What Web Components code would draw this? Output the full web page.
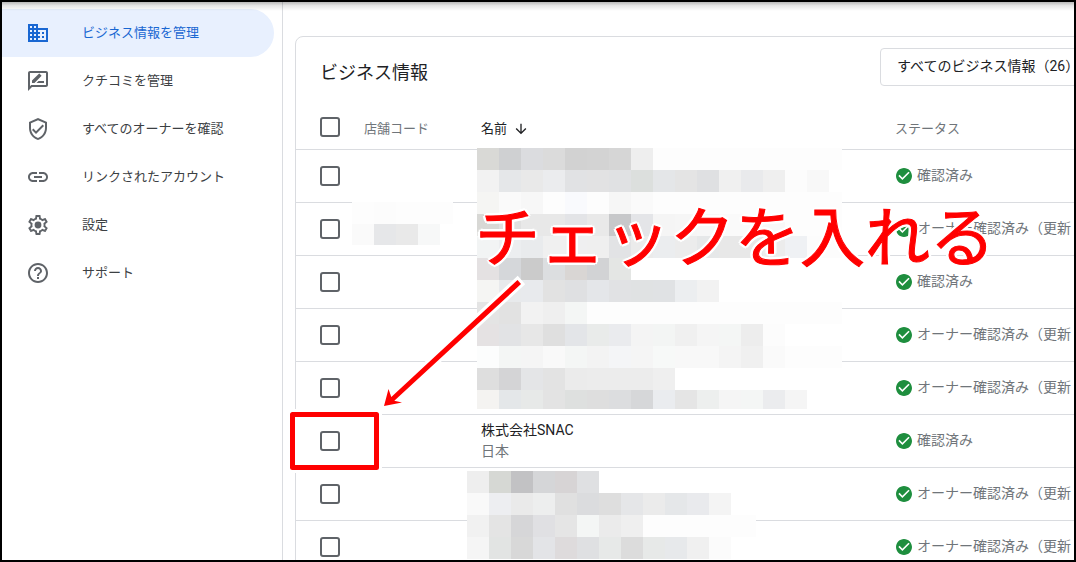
<!DOCTYPE html>
<html lang="ja">
<head>
<meta charset="utf-8">
<meta name="viewport" content="width=device-width, initial-scale=1">
<title>ビジネス情報</title>
<style>
  html, body { margin: 0; height: 100%; background: #fff; }
  body { font-family: Roboto, "Noto Sans CJK JP", sans-serif; font-size: 13px; color: #202124; overflow: hidden; }
</style>
</head>
<body>
<app-frame>
  <side-nav slot="nav">
    <nav-item icon="domain" active>ビジネス情報を管理</nav-item>
    <nav-item icon="review">クチコミを管理</nav-item>
    <nav-item icon="shield">すべてのオーナーを確認</nav-item>
    <nav-item icon="link">リンクされたアカウント</nav-item>
    <nav-item icon="settings">設定</nav-item>
    <nav-item icon="help">サポート</nav-item>
  </side-nav>
  <business-card>
    <span slot="title">ビジネス情報</span>
    <business-table></business-table>
  </business-card>
  <guide-overlay slot="overlay"><span>チェックを入れる</span></guide-overlay>
</app-frame>

<script>
const define = (name, html, setup) => {
  const template = document.createElement('template');
  template.innerHTML = html;
  customElements.define(name, class extends HTMLElement {
    connectedCallback() {
      if (this.shadowRoot) return;
      this.attachShadow({ mode: 'open' }).append(template.content.cloneNode(true));
      if (setup) setup(this, this.shadowRoot);
    }
  });
};

const GEAR = 'M19.43 12.98c.04-.32.07-.64.07-.98 0-.34-.03-.66-.07-.98l2.11-1.65c.19-.15.24-.42.12-.64l-2-3.46c-.09-.16-.26-.25-.44-.25-.06 0-.12.01-.17.03l-2.49 1c-.52-.4-1.08-.73-1.69-.98l-.38-2.65C14.46 2.18 14.25 2 14 2h-4c-.25 0-.46.18-.49.42l-.38 2.65c-.61.25-1.17.59-1.69.98l-2.49-1c-.06-.02-.12-.03-.18-.03-.17 0-.34.09-.43.25l-2 3.46c-.13.22-.07.49.12.64l2.11 1.65c-.04.32-.07.65-.07.98 0 .33.03.66.07.98l-2.11 1.65c-.19.15-.24.42-.12.64l2 3.46c.09.16.26.25.44.25.06 0 .12-.01.17-.03l2.49-1c.52.4 1.08.73 1.69.98l.38 2.65c.03.24.24.42.49.42h4c.25 0 .46-.18.49-.42l.38-2.65c.61-.25 1.17-.59 1.69-.98l2.49 1c.06.02.12.03.18.03.17 0 .34-.09.43-.25l2-3.46c.12-.22.07-.49-.12-.64l-2.11-1.65z';

const ICONS = {
  domain: '<path d="M12 7V3H2v18h20V7H12zM6 19H4v-2h2v2zm0-4H4v-2h2v2zm0-4H4V9h2v2zm0-4H4V5h2v2zm4 12H8v-2h2v2zm0-4H8v-2h2v2zm0-4H8V9h2v2zm0-4H8V5h2v2zm10 12h-8v-2h2v-2h-2v-2h2v-2h-2V9h8v10zm-2-8h-2v2h2v-2zm0 4h-2v2h2v-2z"/>',
  review: '<path d="M20 2H4c-1.1 0-2 .9-2 2v18l4-4h14c1.1 0 2-.9 2-2V4c0-1.1-.9-2-2-2zm0 14H5.17L4 17.17V4h16v12z"/><path d="M6 14h2.5l6.88-6.88c.2-.2.2-.51 0-.71l-1.77-1.77c-.2-.2-.51-.2-.71 0L6 11.53V14zM18 14v-2h-5.5l-2 2z"/>',
  shield: '<path d="M12 1L3 5v6c0 5.55 3.84 10.74 9 12 5.16-1.26 9-6.45 9-12V5l-9-4zm7 10c0 4.52-2.98 8.69-7 9.93-4.02-1.24-7-5.41-7-9.93V6.3l7-3.11 7 3.11V11zm-11.59.59L6 13l4 4 8-8-1.41-1.42L10 14.17z"/>',
  link: '<path d="M3.9 12c0-1.71 1.39-3.1 3.1-3.1h4V7H7c-2.76 0-5 2.24-5 5s2.24 5 5 5h4v-1.9H7c-1.71 0-3.1-1.39-3.1-3.1zM8 13h8v-2H8v2zm9-6h-4v1.9h4c1.71 0 3.1 1.39 3.1 3.1s-1.39 3.1-3.1 3.1h-4V17h4c2.76 0 5-2.24 5-5s-2.24-5-5-5z"/>',
  settings: `<clipPath id="gear"><path d="${GEAR}"/></clipPath><path d="${GEAR}" fill="none" stroke="currentColor" stroke-width="3.8" clip-path="url(#gear)"/><circle cx="12" cy="12" r="3.4"/>`,
  help: '<path d="M11 18h2v-2h-2v2zm1-16C6.48 2 2 6.48 2 12s4.48 10 10 10 10-4.48 10-10S17.52 2 12 2zm0 18c-4.41 0-8-3.59-8-8s3.59-8 8-8 8 3.59 8 8-3.59 8-8 8zm0-14c-2.21 0-4 1.79-4 4h2c0-1.1.9-2 2-2s2 .9 2 2c0 2-3 1.75-3 5h2c0-2.25 3-2.5 3-5 0-2.21-1.79-4-4-4z"/>',
  down: '<path d="M20 12l-1.41-1.41L13 16.17V4h-2v12.17l-5.58-5.59L4 12l8 8 8-8z"/>',
  check: '<path d="M12 0C5.4 0 0 5.4 0 12s5.4 12 12 12 12-5.4 12-12S18.600 0 12 0zm-2.400 18l-6-6 1.700-1.700 4.300 4.300 9.100-9.100L20.400 7.200 9.600 18z"/>'
};

define('ui-icon', `
<style>
  :host { display: block; flex: none; width: 24px; height: 24px; }
  svg { display: block; width: 100%; height: 100%; fill: currentColor; }
</style>
<svg viewBox="0 0 24 24" aria-hidden="true"></svg>`,
(host, root) => { root.querySelector('svg').innerHTML = ICONS[host.getAttribute('name')]; });

/* Window frame: navigation, content and the guide drawn over both */
define('app-frame', `
<style>
  :host { display: grid; grid-template-columns: 281px minmax(0, 1fr); position: relative; box-sizing: border-box;
    height: 100vh; border: 2px solid #000; overflow: hidden; }
  .shade { position: absolute; inset: 0 0 auto 0; height: 9px; pointer-events: none;
    background: linear-gradient(rgba(0,0,0,.28), rgba(0,0,0,.1) 40%, rgba(0,0,0,0)); }
  main { min-width: 0; padding: 34px 0 0 12px; overflow: hidden; }
</style>
<slot name="nav"></slot>
<main><slot></slot></main>
<div class="shade"></div>
<slot name="overlay"></slot>`);

define('side-nav', `
<style>
  :host { display: block; border-right: 1px solid #dadce0; }
  nav { display: flex; flex-direction: column; padding: 7px 8px 0 0; }
</style>
<nav><slot></slot></nav>`);

define('nav-item', `
<style>
  :host { display: block; color: #5f6368; }
  a { display: flex; align-items: center; gap: 32px; height: 48px; padding-left: 24px; color: inherit;
    text-decoration: none; border-radius: 0 24px 24px 0; }
  span { color: #3c4043; font-size: 13px; line-height: 20px; white-space: nowrap; }
  :host([active]) { color: #1967d2; }
  :host([active]) a { background: #e8f0fe; }
  :host([active]) span { color: inherit; }
</style>
<a href="#"><span><slot></slot></span></a>`,
(host, root) => {
  const icon = document.createElement('ui-icon');
  icon.setAttribute('name', host.getAttribute('icon'));
  root.querySelector('a').prepend(icon);
});

define('business-card', `
<style>
  :host { display: block; margin-right: -60px; border: 1px solid #dadce0; border-radius: 8px; }
  header { display: flex; align-items: center; justify-content: space-between; padding: 11px 23px 19px 24px; }
  h1 { margin: 0; font-size: 18px; line-height: 24px; font-weight: 400; padding-top: 12px; }
  select { appearance: none; box-sizing: border-box; width: 230px; height: 38px; margin: 0; padding: 0 16px 3px 16px;
    border: 1px solid #dadce0; border-radius: 4px; background: #fff; color: #202124;
    font: 400 14px/20px Roboto, "Noto Sans CJK JP", sans-serif; }
</style>
<header>
  <h1><slot name="title"></slot></h1>
  <select aria-label="表示するビジネス情報"><option>すべてのビジネス情報（26）</option></select>
</header>
<slot></slot>`);

define('status-label', `
<style>
  :host { display: flex; align-items: center; gap: 5px; font-size: 14px; line-height: 20px; color: #70757a; white-space: nowrap; }
  ui-icon { width: 16px; height: 16px; margin-left: 1px; color: #1e8e3e; }
  span { padding-bottom: 2px; }
</style>
<ui-icon name="check"></ui-icon><span><slot></slot></span>`);

define('business-table', `
<style>
  :host { display: block; }
  table { width: 100%; table-layout: fixed; border-collapse: separate; border-spacing: 0; }
  .check { width: 68px; } .code { width: 117px; } .status { width: 238px; }
  th, td { box-sizing: border-box; height: 53px; padding: 0; border-bottom: 1px solid #dadce0; text-align: left; vertical-align: middle; }
  th { height: 45px; padding-top: 4px; font-size: 13px; line-height: 20px; font-weight: 400; color: #70757a; }
  th.check { padding-top: 0; }
  th.name { color: #202124; }
  .sort { display: flex; align-items: center; gap: 6px; }
  .sort ui-icon { width: 16px; height: 16px; }
  input { appearance: none; display: block; box-sizing: border-box; width: 20px; height: 20px; margin: 0 0 0 24px;
    border: 2px solid #5f6368; border-radius: 3px; background: #fff; }
  td.name { font-size: 14px; line-height: 21px; }
  td.name small { display: block; font-size: 14px; color: #70757a; }
</style>
<table>
  <thead><tr>
    <th class="check"><input type="checkbox" aria-label="すべて選択"></th>
    <th class="code">店舗コード</th>
    <th class="name"><span class="sort">名前<ui-icon name="down"></ui-icon></span></th>
    <th class="status">ステータス</th>
  </tr></thead>
  <tbody></tbody>
</table>`,
(host, root) => {
  const done = '確認済み', renew = 'オーナー確認済み（更新';
  const named = '株式会社SNAC<small>日本</small>';
  root.querySelector('tbody').innerHTML =
    [['', done], ['', renew], ['', done], ['', renew], ['', renew], [named, done], ['', renew], ['', renew]]
      .map(([name, status], i) => `<tr><td><input type="checkbox" aria-label="${i + 1} 行目を選択"></td><td></td><td class="name">${name}</td><td><status-label>${status}</status-label></td></tr>`)
      .join('');
});

/* Mosaic patches: one line of cell colours per row; the last colour runs to the row's end */
const PATCHES = {
  names: { x: 477, y: 148, w: 365, h: 261, rows: [
    'd9d9d6 cfd0d2 dbdcdf dbdbdb d2d2d2 d3d3d3 d6d6d6 eeeeee fdfdfd',
    'f2f2f2 e5e7e9 e9e9e9 ebecee e1e2e4 e2e2e3 e0e1e3 dcdfdd e4e6e8 e4e4e4 dfe0e2 f0f0f0 e9eaec efefef fcfcfc f8f8f8 ffffff',
    'f5f5f3 fafafa f7f7f7 fdfdfd f9fafd fdfdfd f6f6f6 fafafa fdfdfd',
    'd8d8d5 e0e0e0 e8e8e8 e8e8e8 e3e4e7 e9e9e9 c7c8ca e4e5e8 f5f5f5 f6f6f6 f7f7f7 fafafa fafafa f8f8f8 fdfdfd',
    'f2f4f4 eceef0 e9ebed f0f0f0 efeff0 efefef e2e3e5 ebebeb ebedef ececec e6e8e9 e8e8e8 e8e8e8 ececec eff1f4 fcfcfc',
    'e4e1e2 d5d7da cbcbcb dcdee0 d9d6d4 d2d3d5 e4e6e4 ffffff',
    'f5f5f3 e8eaec e8eaed e2e2e2 dfe0e2 e4e6e9 e1e2e4 e0e2e3 e0e2e4 eceef0 f2f2f2 ffffff',
    'e4e4e4 e2e2e2 f2f2f2 efefef f4f6f5 fdfdfd',
    'e5e2e3 e2e3e5 e7e7e7 dfdfdf e3e5e8 e9ebea eaebee f4f4f4 f3f5f4 f0f0f0 f5f5f5 f4f6f5 ededed fcfcfc ffffff',
    'fcfdfd f4f6f5 f5f5f5 f9f9f9 f4f6f5 f3f3f3 f4f5f7 f5f5f5 f7f9f8 f8f8f8 f8f8f8 f4f4f4 f0f0f0 fafafa fdfdfd',
    'dedede d4d4d6 e4e5e7 e3e3e3 ebebeb ececec ececec ececec efefef ffffff',
    'f4f3f1 e4e7e9 e7e9e8 e3e3e3 dee0df dedede dcdddf d6d7d9 eaecef e5e5e5 edefee f5f5f5 f4f6f5 ebecee f5f5f5 ffffff'] },
  more: { x: 467, y: 471, w: 289, h: 88, rows: [
    'eeeeee d6d8d4 c2c2c4 d5d6d8 d7d4d5 dfe0e2 ffffff',
    'f9f9f9 edeef1 eaeaea edeeee e0e0e0 dbdcde dedede e5e6e8 ebebeb e5e7e9 e9eaed f4f4f4 ffffff',
    'f1f1f1 e4e4e4 d6d6d8 e0e0e3 e5e5e5 f4f6f5 ebebeb efefef fdfdfd',
    'f5f5f5 e2e4e3 d8d8d8 e3e4e7 dedbdc dfe0e2 e7e9e8 dcdcdc e7e9e8 e7e9eb f0f0f0 fbfbfb ffffff'] },
  code: { x: 352, y: 202, w: 101, h: 43, rows: [
    'fdfdfd fcfcfc fdfdfd', 'fafafa e6e7e9 e9e9e9 f7f8f8 ffffff'] }
};

define('guide-overlay', `
<style>
  :host { position: absolute; inset: -2px; pointer-events: none; z-index: 1; clip-path: inset(2px); }
  svg { position: absolute; left: 0; top: 0; width: 100%; height: 100%; }
  p { position: absolute; left: 475px; top: 185px; margin: 0; font: 400 65px/96px "Noto Sans CJK JP", sans-serif;
    white-space: nowrap; color: #f00; -webkit-text-stroke: 1px #f00;
    text-shadow: 3px 0 #fff, -3px 0 #fff, 0 3px #fff, 0 -3px #fff, 2px 2px #fff, -2px 2px #fff, 2px -2px #fff, -2px -2px #fff; }
</style>
<svg aria-hidden="true">
  <g id="patches" shape-rendering="crispEdges"></g>
  <g fill="none" stroke-linejoin="round">
    <rect x="292.500" y="414.500" width="84" height="53" stroke="#fff" stroke-width="11"/>
    <rect x="292.500" y="414.500" width="84" height="53" stroke="#f00" stroke-width="5"/>
  </g>
  <path d="M384 406L388.500 389 391.300 397 517.500 280 521 284 394.300 400.700 402 402.500Z" fill="#f00" stroke="#fff" stroke-width="6" stroke-linejoin="miter" paint-order="stroke"/>
</svg>
<p><slot></slot></p>`,
(host, root) => {
  const size = 22;
  root.querySelector('#patches').innerHTML = Object.values(PATCHES).map(({ x, y, w, h, rows }) =>
    rows.map((row, r) => {
      const colors = row.split(' ');
      return colors.map((c, i) => {
        const width = i === colors.length - 1 ? w - i * size : size;
        const height = Math.min(size, h - r * size);
        return `<rect x="${x + i * size}" y="${y + r * size}" width="${width}" height="${height}" fill="#${c}"/>`;
      }).join('');
    }).join('')).join('');
});
</script>
</body>
</html>
